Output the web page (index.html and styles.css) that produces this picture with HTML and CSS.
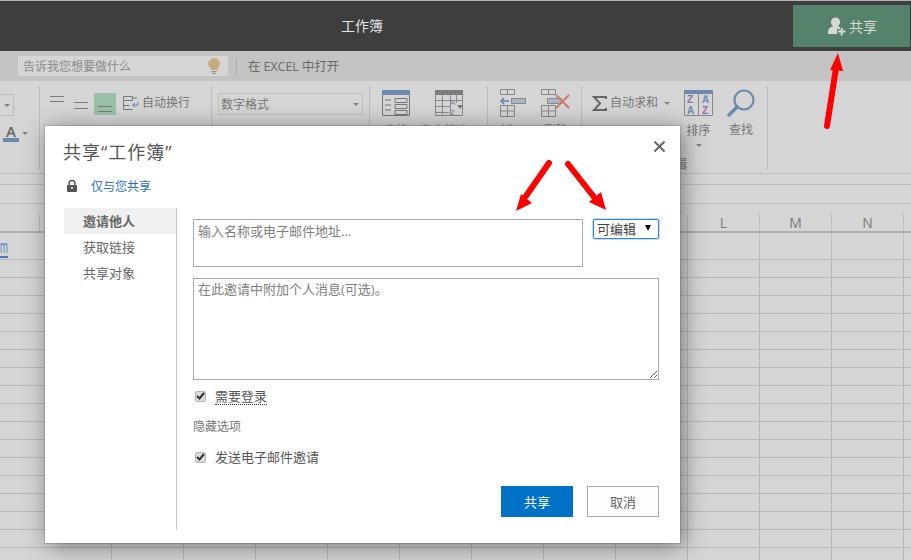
FILE: index.html
```html
<!DOCTYPE html>
<html lang="zh-CN">
  <head>
    <meta charset="UTF-8" />
    <meta name="viewport" content="width=device-width, initial-scale=1.0" />
    <title>共享工作簿</title>
    <link rel="stylesheet" href="styles.css">
  </head>
  <body>
    <div class="app">
      <div class="titlebar">
        <div class="doc-title">工作簿</div>
        <button class="share-top">
          <svg width="18" height="19" viewBox="0 0 18 19"><circle cx="7.500" cy="5" r="4.600" fill="#d8d8d8"/><path d="M0 16c0-5 3-7 7.500-7 2 0 3.500.4 4.500 1.300V12H9v3h0v2H0z" fill="#d8d8d8"/><path d="M10 14.500h7.500M13.700 11v7.500" stroke="#d8d8d8" stroke-width="2"/></svg>
          <span>共享</span>
        </button>
      </div>

      <div class="tellbar">
        <div class="tell-box">
          <span>告诉我您想要做什么</span>
          <svg width="12" height="16" viewBox="0 0 12 16"><path d="M6 0a5.800 5.800 0 0 1 5.800 5.800c0 2.600-1.800 3.600-2.300 6.200H3.500C3 9.400.2 8.400.2 5.800A5.800 5.800 0 0 1 6 0z" fill="#c6ab7c"/><path d="M3.500 13h5v1.200h-5zM4.500 15h3v1h-3z" fill="#8f8f8f"/></svg>
        </div>
        <div class="tell-sep"></div>
        <div class="tell-open">在 EXCEL 中打开</div>
      </div>

      <div class="ribbon">
        <div class="group g-font">
          <div class="combo-stub"><i class="caret"></i></div>
          <div class="font-color"><span class="a-letter">A</span><i class="caret"></i></div>
        </div>

        <div class="group g-align">
          <svg width="38" height="16" viewBox="0 0 38 16" stroke="#7c7c7c" fill="none"><path d="M0 2.500h14M0 7.500h14M24 8.500h14M24 14.500h14"/></svg>
          <div class="align-active">
            <svg width="14" height="7" viewBox="0 0 14 7" stroke="#6f8578" fill="none"><path d="M0 .5h14M0 5.500h14"/></svg>
          </div>
          <svg class="wrap-icon" width="16" height="15" viewBox="0 0 16 15" stroke="#777" fill="none"><path d="M.5.500h9v4h-9zM.5 4.500v9h9M.5 9.500h6"/><path d="M15 6v3h-5" stroke="#5d83ad"/><path d="M12 7l-2.500 2 2.500 2" stroke="#5d83ad"/><path d="M9 2h5"/></svg>
          <span class="rb-text">自动换行</span>
        </div>

        <div class="group g-number">
          <div class="number-select"><span>数字格式</span><i class="caret"></i></div>
        </div>

        <div class="group g-tables">
          <div class="tool">
            <svg width="28" height="26" viewBox="0 0 28 26" fill="none" stroke="#777"><path d="M.5.500h27v25H.5z"/><path d="M0 0h28v5H0z" fill="#6c8ab0" stroke="none"/><path d="M3 10h6M3 15h6M3 20h6M13 8.500h12v4H13zM13 14.500h12v4H13zM13 20.500h12v4H13z"/></svg>
            <span class="tool-label">表格</span>
          </div>
          <div class="tool tool-sort">
            <svg width="28" height="26" viewBox="0 0 28 26" fill="none" stroke="#888"><path d="M.5.500h27v25H.5z"/><path d="M0 0h28v5H0z" fill="#7d7d7d" stroke="none"/><path d="M0 10.500h28M0 16.500h16M0 22.500h14M7.500 5v21M15.500 5v21M21.500 5v8"/><text x="15" y="15" class="az a-blue">A</text><text x="15" y="25" class="az z-purple">Z</text><path d="M22 15h6l-3 4z" fill="#777" stroke="none"/></svg>
            <span class="tool-label">表中筛选</span>
          </div>
        </div>

        <div class="group g-cells">
          <div class="tool">
            <svg width="26" height="28" viewBox="0 0 26 28" fill="none" stroke="#888"><path d="M.5.500h14v5H.5zM.5 16.500h14v11H.5zM.5 22h14M7.500 .5v5M7.500 16.500v11M11.500 9.500h14v5h-14zM18.500 9.500v5"/><path d="M11.500 9.500h14v5h-14z" fill="#a9b6c6"/><path d="M1 12h8M4 9l-3 3 3 3" stroke="#5d83ad" stroke-width="1.500"/></svg>
            <span class="tool-label">插入</span>
          </div>
          <div class="tool">
            <svg width="30" height="28" viewBox="0 0 30 28" fill="none" stroke="#888"><path d="M.5.500h14v5H.5zM.5 16.500h14v11H.5zM.5 22h14M7.500 .5v5M7.500 16.500v11"/><path d="M6.500 9.500h14v5h-14z" fill="#a9b6c6"/><path d="M15 6l13 13M28 6L15 19" stroke="#c87a68" stroke-width="2"/></svg>
            <span class="tool-label">删除</span>
          </div>
        </div>

        <div class="group g-edit">
          <div class="sum-row">
            <svg width="15" height="15" viewBox="0 0 15 15" fill="none" stroke="#666" stroke-width="2"><path d="M14 3V1H2l6 6.500L2 14h12v-2"/></svg>
            <span class="rb-text">自动求和</span>
            <i class="caret"></i>
          </div>
          <div class="tool tool-az">
            <svg width="29" height="26" viewBox="0 0 29 26" fill="none" stroke="#888"><path d="M.5.500h28v25H.5zM14.500 4v22"/><path d="M0 0h29v4H0z" fill="#6c8ab0" stroke="none"/><text x="3" y="13" class="az2 z-purple">Z</text><text x="3" y="24" class="az2 a-blue">A</text><text x="18" y="13" class="az2 a-blue">A</text><text x="18" y="24" class="az2 z-purple">Z</text></svg>
            <span class="tool-label">排序</span>
            <i class="caret"></i>
          </div>
          <div class="tool tool-find">
            <svg width="28" height="28" viewBox="0 0 28 28" fill="none" stroke="#6c8ab0"><circle cx="17" cy="11" r="9.500" stroke-width="2.200"/><path d="M10 18L2 26" stroke-width="3.500" stroke-linecap="round"/></svg>
            <span class="tool-label">查找</span>
          </div>
          <span class="group-name">编辑</span>
        </div>
      </div>

      <div class="formula-a"></div>
      <div class="formula-b"></div>

      <div class="col-heads">
        <div class="col-blank"></div>
        <div class="col-head">L</div>
        <div class="col-head">M</div>
        <div class="col-head">N</div>
        <div class="col-head col-last"></div>
      </div>

      <div class="first-row"><a class="cell-link"><span>m</span></a></div>
      <div class="grid"></div>
    </div>

    <div class="dialog">
      <div class="dialog-head">
        <h1>共享“工作簿”</h1>
        <svg class="close" width="11" height="11" viewBox="0 0 11 11" stroke="#666" stroke-width="2"><path d="M.5.500l10 10M10.500.5l-10 10"/></svg>
      </div>
      <div class="perm">
        <svg width="10" height="12" viewBox="0 0 10 12"><path d="M2 5V3.500a3 3 0 0 1 6 0V5" fill="none" stroke="#555" stroke-width="1.500"/><rect y="5" width="10" height="7" rx="1" fill="#555"/><circle cx="5" cy="8" r="1" fill="#fff"/></svg>
        <a>仅与您共享</a>
      </div>
      <div class="dialog-body">
        <ul class="side-nav">
          <li class="active">邀请他人</li>
          <li>获取链接</li>
          <li>共享对象</li>
        </ul>
        <div class="form">
          <div class="invite-row">
            <textarea class="names" placeholder="输入名称或电子邮件地址..."></textarea>
            <div class="perm-select"><span>可编辑</span><i class="tri"></i></div>
          </div>
          <textarea class="message" placeholder="在此邀请中附加个人消息(可选)。"></textarea>
          <div class="check-row">
            <span class="check"><svg width="9" height="8" viewBox="0 0 9 8" fill="none" stroke="#333" stroke-width="2"><path d="M1 4l2.500 2.500L8 1"/></svg></span>
            <span class="need-login">需要登录</span>
          </div>
          <div class="hide-opts">隐藏选项</div>
          <div class="check-row send-row">
            <span class="check"><svg width="9" height="8" viewBox="0 0 9 8" fill="none" stroke="#333" stroke-width="2"><path d="M1 4l2.500 2.500L8 1"/></svg></span>
            <span>发送电子邮件邀请</span>
          </div>
          <div class="actions">
            <button class="btn-primary">共享</button>
            <button class="btn-cancel">取消</button>
          </div>
        </div>
      </div>
    </div>

    <svg class="arrows" width="911" height="560" viewBox="0 0 911 560">
      <g stroke="#f00" stroke-width="6" stroke-linecap="round" fill="none">
        <path d="M827 126L836 68"/>
        <path d="M549 163L526 196"/>
        <path d="M568 164L594 197"/>
      </g>
      <g fill="#f00">
        <path d="M838 53L830 70L843 71z"/>
        <path d="M516 211L521 194L532 203z"/>
        <path d="M606 210L589 202L601 192z"/>
      </g>
    </svg>
  </body>
</html>
```

FILE: styles.css
```css
* {
  box-sizing: border-box;
}
body {
  margin: 0;
  width: 911px;
  height: 560px;
  overflow: hidden;
  position: relative;
  font-family: "Open Sans", "Noto Sans CJK SC", sans-serif;
  background-color: #d5d5d5;
  color: #666;
}
.caret {
  display: inline-block;
  width: 0;
  height: 0;
  border-left: 3px solid transparent;
  border-right: 3px solid transparent;
  border-top: 3px solid #808080;
}

/* title bar */
.titlebar {
  height: 51px;
  background-color: #3e3e3e;
  border-top: 1px solid #b4b4b4;
  display: flex;
  justify-content: space-between;
  padding: 4px 1px 4px 341px;
}
.doc-title {
  color: #e4e4e4;
  font-size: 14px;
  line-height: 42px;
}
.share-top {
  width: 117px;
  height: 42px;
  background-color: #54826a;
  border: none;
  color: #dcdcdc;
  font: inherit;
  font-size: 14px;
  display: flex;
  align-items: center;
  padding: 0 0 0 35px;
  gap: 3px;
}

.tellbar {
  height: 30px;
  background-color: #c3c3c3;
  display: flex;
  align-items: center;
  padding-left: 18px;
}
.tell-box {
  width: 210px;
  height: 20px;
  background-color: #d5d5d5;
  display: flex;
  align-items: center;
  justify-content: space-between;
  padding: 0 8px 0 5px;
  font-size: 12px;
  color: #8a8a8a;
}
.tell-sep {
  width: 1px;
  height: 16px;
  background-color: #aaa;
  margin: 0 11px 0 8px;
}
.tell-open {
  font-size: 12.400px;
  color: #6a6a6a;
}

/* ribbon */
.ribbon {
  height: 93px;
  padding-top: 5px;
  display: flex;
  align-items: flex-start;
  border-bottom: 1px solid #bcbcbc;
  background-color: #d5d5d5;
}
.group {
  height: 84px;
  border-right: 1px solid #bdbdbd;
  display: flex;
  align-items: flex-start;
  flex-shrink: 0;
  font-size: 12px;
  color: #777;
}
.rb-text {
  font-size: 12px;
  line-height: 16px;
  color: #777;
}
.g-font {
  width: 40px;
  flex-direction: column;
}
.combo-stub {
  width: 14px;
  height: 22px;
  margin-top: 8px;
  border: 1px solid #bcbcbc;
  border-left: none;
  padding: 9px 0 0 4px;
  display: flex;
}
.font-color {
  margin: 8px 0 0 3px;
  display: flex;
  align-items: center;
  gap: 3px;
}
.a-letter {
  width: 16px;
  height: 18px;
  font-size: 15px;
  font-weight: 600;
  line-height: 14px;
  text-align: center;
  color: #666;
  border-bottom: 4px solid #6c8ab0;
}
.g-align {
  width: 172px;
  padding: 8px 0 0 10px;
}
.align-active {
  width: 22px;
  height: 22px;
  margin: -1px 0 0 6px;
  background-color: #9dbfa9;
  padding: 13px 0 0 4px;
  display: flex;
}
.wrap-icon {
  margin: 2px 3px 0 7px;
}
.g-align .rb-text {
  margin-top: 1px;
}
.g-number {
  width: 158px;
  padding: 7px 0 0 6px;
}
.number-select {
  width: 145px;
  height: 22px;
  border: 1px solid #bcbcbc;
  display: flex;
  align-items: center;
  justify-content: space-between;
  padding: 0 3px 0 2px;
  font-size: 12px;
  color: #777;
}
.tool {
  display: flex;
  flex-direction: column;
  align-items: center;
}
.tool-label {
  font-size: 12px;
  line-height: 16px;
  color: #777;
  margin-top: 7px;
  white-space: nowrap;
}
.g-tables {
  width: 118px;
  padding: 4px 0 0 12px;
  gap: 25px;
}
.tool-sort {
  align-items: flex-start;
}
.tool-sort .tool-label {
  margin-left: -15px;
}
.g-cells {
  width: 94px;
  padding: 3px 0 0 12px;
  gap: 15px;
}
.g-cells .tool-label {
  margin-top: 6px;
}
.g-edit {
  width: 186px;
  padding: 0 0 0 10px;
  position: relative;
}
.sum-row {
  display: flex;
  align-items: center;
  gap: 3px;
  margin-top: 9px;
  width: 92px;
}
.sum-row .caret {
  margin-left: 3px;
}
.tool-az {
  margin: 4px 0 0 0;
}
.tool-az .tool-label {
  margin-top: 7px;
}
.tool-az .caret {
  margin-top: 5px;
}
.tool-find {
  margin: 3px 0 0 14px;
}
.tool-find .tool-label {
  margin-top: 5px;
}
.group-name {
  position: absolute;
  left: 81px;
  top: 72px;
  line-height: 14px;
}
.az {
  font-family: "Liberation Sans", sans-serif;
  font-size: 8px;
  stroke: none;
}
.az2 {
  font-family: "Liberation Sans", sans-serif;
  font-size: 10px;
  font-weight: 700;
  stroke: none;
}
.a-blue {
  fill: #6c8ab0;
}
.z-purple {
  fill: #8f70a8;
}

/* sheet */
.formula-a {
  height: 11px;
  border-bottom: 1px solid #bcbcbc;
}
.formula-b {
  height: 19px;
  border-bottom: 1px solid #c0c0c0;
}
.col-heads {
  height: 29px;
  padding-top: 10px;
  display: flex;
  border-bottom: 2px solid #b0b0b0;
}
.col-blank {
  width: 648px;
  margin-left: 39px;
  border-left: 1px solid #bdbdbd;
  flex-shrink: 0;
}
.col-head {
  width: 72px;
  flex-shrink: 0;
  border-left: 1px solid #bdbdbd;
  text-align: center;
  font-size: 14px;
  line-height: 17px;
  color: #7a7a7a;
}
.col-last {
  width: auto;
  flex: 1;
}
.first-row {
  height: 27px;
  border-bottom: 1px solid #b8b8b8;
  background-image: repeating-linear-gradient(90deg, transparent 0, transparent 71px, #bdbdbd 71px, #bdbdbd 72px);
  background-position: 40px 0;
}
.cell-link {
  display: block;
  width: 8px;
  height: 25px;
  color: #4f7ab8;
  border-bottom: 2px solid #4f7ab8;
}
.cell-link span {
  display: block;
  font-size: 18px;
  line-height: 26px;
  transform: scaleX(0.48);
  transform-origin: left center;
}
.grid {
  height: 300px;
  background-image:
    repeating-linear-gradient(180deg, transparent 0, transparent 17px, #b8b8b8 17px, #b8b8b8 18px),
    repeating-linear-gradient(90deg, transparent 0, transparent 71px, #b8b8b8 71px, #b8b8b8 72px);
  background-position: 0 0, 40px 0;
}

/* dialog */
.dialog {
  position: absolute;
  left: 45px;
  top: 126px;
  width: 635px;
  height: 417px;
  background-color: #fff;
  box-shadow: 3px 3px 22px rgba(0, 0, 0, 0.45), 0 0 0 1px rgba(170, 170, 170, 0.6);
  padding: 0 21px 0 19px;
}
.dialog-head {
  display: flex;
  justify-content: space-between;
  height: 44px;
  padding-top: 13px;
}
.dialog-head h1 {
  margin: 0 0 0 -1px;
  font-size: 18px;
  font-weight: 400;
  letter-spacing: 1px;
  line-height: 26px;
  color: #555;
}
.close {
  margin: 2px 0 0 0;
  position: relative;
  left: 6px;
}
.perm {
  display: flex;
  align-items: center;
  height: 20px;
  margin-top: 6px;
  padding-left: 3px;
  gap: 14px;
}
.perm a {
  font-size: 12px;
  color: #2b6fc4;
}
.dialog-body {
  display: flex;
  margin-top: 12px;
}
.side-nav {
  list-style: none;
  margin: 0;
  padding: 0;
  width: 113px;
  height: 322px;
  border-right: 1px solid #c4c4c4;
  flex-shrink: 0;
}
.side-nav li {
  height: 26px;
  line-height: 26px;
  padding-left: 19px;
  font-size: 13px;
  color: #666;
}
.side-nav li.active {
  background-color: #f0f0f0;
  font-weight: 700;
}
.form {
  margin-left: 16px;
  width: 466px;
}
.invite-row {
  display: flex;
  justify-content: space-between;
  align-items: flex-start;
  margin-top: 11px;
}
textarea {
  display: block;
  border: 1px solid #aaa;
  border-radius: 0;
  margin: 0;
  outline: none;
  font: inherit;
  font-size: 13px;
  line-height: 20px;
  padding: 1px 4px;
}
textarea::placeholder {
  color: #808080;
  opacity: 1;
}
.names {
  width: 390px;
  height: 48px;
  resize: none;
}
.perm-select {
  width: 66px;
  height: 20px;
  border: 1px solid #2f86e0;
  box-shadow: 0 0 0 1px rgba(90, 155, 224, 0.35);
  border-radius: 2px;
  display: flex;
  align-items: center;
  justify-content: space-between;
  padding: 0 7px 2px 3px;
  font-size: 13px;
  color: #444;
}
.tri {
  width: 0;
  height: 0;
  border-left: 3.500px solid transparent;
  border-right: 3.500px solid transparent;
  border-top: 6px solid #111;
}
.message {
  width: 466px;
  height: 102px;
  margin-top: 11px;
  padding-top: 0;
}
.check-row {
  display: flex;
  align-items: center;
  margin-top: 6px;
  padding-left: 2px;
  height: 20px;
  font-size: 13px;
  line-height: 16px;
  color: #555;
}
.check {
  width: 11px;
  height: 11px;
  margin-right: 9px;
  background-color: #dcdcdc;
  border: 1px solid #b5b5b5;
  border-radius: 2px;
  display: flex;
  align-items: center;
  justify-content: center;
}
.need-login {
  border-bottom: 1px dotted #333;
}
.hide-opts {
  margin-top: 12px;
  font-size: 12px;
  line-height: 18px;
  color: #777;
}
.send-row {
  margin-top: 11px;
}
.actions {
  display: flex;
  justify-content: flex-end;
  gap: 14px;
  margin-top: 19px;
}
.actions button {
  width: 72px;
  height: 31px;
  font: inherit;
  font-size: 13px;
  padding: 0;
}
.btn-primary {
  background-color: #0072c6;
  color: #fff;
  border: none;
}
.btn-cancel {
  background-color: #fdfdfd;
  color: #666;
  border: 1px solid #aaa;
}

.arrows {
  position: absolute;
  left: 0;
  top: 0;
  pointer-events: none;
}
```
